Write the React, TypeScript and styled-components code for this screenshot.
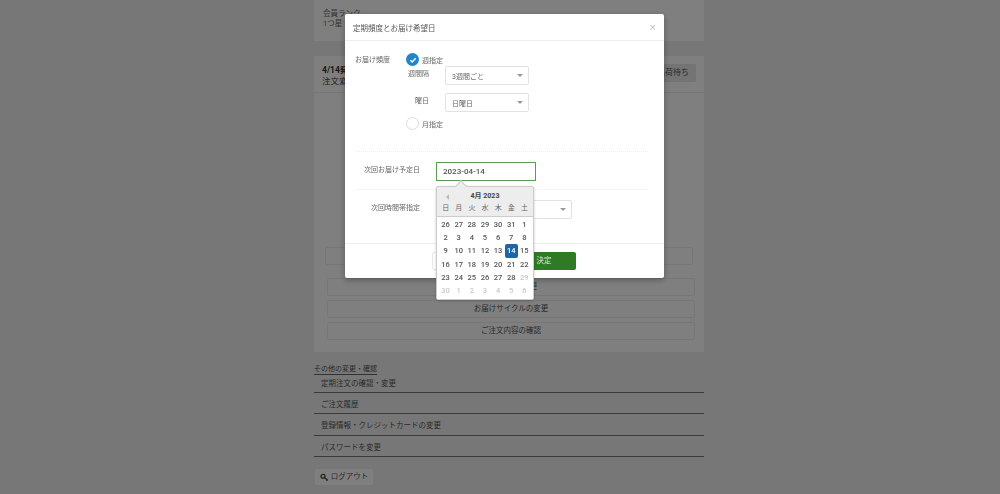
import React from "react";
import styled, { createGlobalStyle } from "styled-components";

const Global = createGlobalStyle`
  html, body { margin: 0; height: 494px; overflow: hidden; background: #eeeeee; }
  body { font-family: Roboto, "Noto Sans CJK JP", sans-serif; color: #333; }
`;
const Page = styled.div`
  width: 390px; margin-left: 314px;
`;
const Card = styled.section`
  background: #fff; padding: 8px 11px; box-sizing: border-box;
`;
const RankCard = styled(Card)`
  height: 41px; margin-bottom: 15px; font-size: 7.5px; line-height: 10px; color: #666; padding: 9px 9px;
`;
const OrderCard = styled(Card)`
  height: 296px; display: flex; flex-direction: column;
`;
const OrderHead = styled.div`
  display: flex; justify-content: space-between; height: 29px; box-sizing: border-box; border-bottom: 1px solid #eee; margin: 0 -11px; padding: 0 8px 0 8px;
  font-size: 8.5px; line-height: 11px; color: #444;
`;
const HeadText = styled.div`padding-top: 1px;`;
const Status = styled.span`
  background: #e8e8e8; height: 18px; line-height: 18px; padding: 0 7px; font-size: 8px; color: #555; border-radius: 2px;
`;
const Bold = styled.b`display: block; font-weight: 700; color: #333;`;
const Actions = styled.div`
  margin-top: auto; display: flex; flex-direction: column; gap: 4px; padding-bottom: 4px;
`;
const LoneAction = styled.div`
  height: 18px; box-sizing: border-box; border: 1px solid #eeeeee; border-radius: 2px; margin-bottom: 9.5px;
`;
const Action = styled.div`
  height: 18px; box-sizing: border-box; border: 1px solid #eeeeee; border-radius: 2px; margin: 0 -2px 0 2px;
  font-size: 7.5px; line-height: 16px; text-align: center; color: #555;
`;
const SectionLink = styled.a`
  display: block; width: fit-content; margin: 13px 0 -3.4px; font-size: 7px; line-height: 9px; color: #555; border-bottom: 1px solid #666;
`;
const LinkRow = styled.div`
  height: 21.4px; box-sizing: border-box; border-bottom: 1px solid #777; padding: 6px 7px 0; font-size: 7.5px; line-height: 12px; color: #555;
`;
const Logout = styled.div`
  margin-top: 12px; margin-left: 1px; width: 58px; height: 16px; background: #fff; border-radius: 2px; font-size: 7.5px; line-height: 16px;
  display: flex; align-items: center; justify-content: center; gap: 2px; color: #555;
`;
const Overlay = styled.div`
  position: fixed; inset: 0; background: rgba(0,0,0,.5);
`;
const Modal = styled.div`
  position: absolute; left: 345px; top: 14px; width: 319px; height: 264px; background: #fff; border-radius: 2px;
  box-shadow: 0 2px 6px rgba(0,0,0,.3); display: flex; flex-direction: column;
`;
const ModalHead = styled.header`
  height: 26px; flex: none; box-sizing: content-box; border-bottom: 1px solid #eee; display: flex; justify-content: space-between; align-items: center;
  padding: 0 8px; font-size: 7.5px; color: #555;
`;
const Close = styled.span`color: #bbb; font-size: 11px; font-family: "Liberation Sans", sans-serif;`;
const ModalBody = styled.div`
  flex: 1; padding: 12px 16px 0 10px; font-size: 7px; color: #666;
`;
const FreqRow = styled.div`display: flex; height: 98px; border-bottom: 1px dotted #eee;`;
const FreqLabel = styled.div`width: 51px; padding-top: 1px;`;
const FreqCol = styled.div`display: flex; flex-direction: column;`;
const RadioRow = styled.div`display: flex; align-items: center; gap: 3px; height: 13px;`;
const Radio = styled.span<{ $on?: boolean }>`
  width: 13px; height: 13px; border-radius: 50%; display: flex; align-items: center; justify-content: center;
  background: ${p => (p.$on ? "#2185c8" : "#fff")}; border: ${p => (p.$on ? "0" : "1px solid #ddd")};
  box-sizing: border-box;
`;
const SelectRow = styled.div<{ $top: number; $bottom?: number }>`
  display: flex; align-items: center; height: 19px; margin-top: ${p => p.$top}px; margin-bottom: ${p => p.$bottom ?? 0}px;
`;
const SelectLabel = styled.div`width: 39px; text-align: right; margin: -5px 16px 0 -16px; flex: none;`;
const Select = styled.div<{ $w: number }>`
  width: ${p => p.$w}px; height: 19px; box-sizing: border-box; border: 1px solid #e2e2e2; border-radius: 2px; display: flex; align-items: center;
  justify-content: space-between; padding: 0 5px 0 6px; font-size: 7px; color: #666; background: #fff;
  &::after { content: ""; border: 3px solid transparent; border-top: 3px solid #999; border-bottom: 0; }
`;
const DateRow = styled.div`display: flex; align-items: center; height: 37px; border-bottom: 1px dotted #eee;`;
const DateLabel = styled.div`width: 65px; margin-right: 16px; text-align: right; flex: none; margin-top: -3px;`;
const DateInput = styled.div`
  width: 100px; height: 19px; box-sizing: border-box; margin-top: 2px; border: 1px solid #5a9a55; padding-left: 6px; line-height: 17px; font-size: 8px; font-weight: 500; color: #555;
`;
const TimeRow = styled.div`display: flex; align-items: center; height: 37px;`;
const TimeSelect = styled(Select)`margin-top: 1px; justify-content: flex-end;`;
const ModalFoot = styled.footer`
  height: 35px; flex: none; border-top: 1px solid #eee; display: flex; gap: 4px; padding: 8px 0 0 87px; box-sizing: border-box;
`;
const Cancel = styled.div`
  width: 76px; height: 18px; box-sizing: border-box; border: 1px solid #e8e8e8; border-radius: 2px;
`;
const Confirm = styled.div`
  width: 64px; height: 18px; line-height: 18px; background: #2f7a24; border-radius: 2px; color: #dfe9d8; font-size: 7.5px; text-align: center;
`;
const Picker = styled.div`
  position: absolute; left: 436px; top: 186px; width: 98px; height: 114px; background: #fff; border: 1px solid #ccc; box-sizing: border-box;
  border-radius: 2px; box-shadow: 0 1px 3px rgba(0,0,0,.2); font-size: 7.5px;
  &::before { content: ""; position: absolute; left: 20px; top: -5px; width: 7px; height: 7px; background: #ededed; border-left: 1px solid #ccc; border-top: 1px solid #ccc; transform: rotate(45deg); }
`;
const PickerHead = styled.div`
  position: relative; height: 29px; background: #ededed; border-bottom: 1px solid #ccc; border-radius: 2px 2px 0 0;
`;
const Title = styled.div`text-align: center; font-weight: 700; font-size: 7px; line-height: 11px; padding-top: 4px; margin-bottom: 1px; color: #444;`;
const Prev = styled.span`position: absolute; left: 9px; top: 7px; border: 3px solid transparent; border-right: 3px solid #bbb; border-left: 0;`;
const Grid = styled.div`
  display: grid; grid-template-columns: repeat(7, 13.14px); padding: 0 2px; justify-content: center;
`;
const Week = styled.span`text-align: center; line-height: 11px; color: #666; font-size: 7px;`;
const Days = styled(Grid)`padding-top: 1px; grid-auto-rows: 13.2px;`;
const Day = styled.span<{ $muted?: boolean; $sel?: boolean }>`
  text-align: center; line-height: 13px; font-weight: 500; border-radius: 2px;
  color: ${p => (p.$sel ? "#fff" : p.$muted ? "#c8c8c8" : "#555")};
  background: ${p => (p.$sel ? "#1d66a6" : "transparent")};
`;

const days = [26,27,28,29,30,31,1,2,3,4,5,6,7,8,9,10,11,12,13,14,15,16,17,18,19,20,21,22,23,24,25,26,27,28,29,30,1,2,3,4,5,6];
const weeks = ["日","月","火","水","木","金","土"];

const KeyIcon = () => (
  <svg width="9" height="9" viewBox="0 0 10 10" fill="none" stroke="#444" strokeWidth="1.4">
    <circle cx="3.4" cy="3.6" r="2.2" /><path d="M5 5.2 8.8 8M7.4 7v1.6" />
  </svg>
);
const Check = () => (
  <svg width="8" height="8" viewBox="0 0 10 10" fill="none" stroke="#fff" strokeWidth="1.8"><path d="M1.8 5.2 4 7.4 8.4 2.8" /></svg>
);

export default function App() {
  return (
    <>
      <Global />
      <Page>
        <RankCard>会員ランク<br />1つ星</RankCard>
        <OrderCard>
          <OrderHead>
            <HeadText><Bold>4/14発送予定</Bold>注文変更</HeadText>
            <Status>出荷待ち</Status>
          </OrderHead>
          <Actions>
            <LoneAction />
            <Action>お届け先の変更</Action>
            <Action>お届けサイクルの変更</Action>
            <Action>ご注文内容の確認</Action>
          </Actions>
        </OrderCard>
        <SectionLink>その他の変更・確認</SectionLink>
        <LinkRow>定期注文の確認・変更</LinkRow>
        <LinkRow>ご注文履歴</LinkRow>
        <LinkRow>登録情報・クレジットカードの変更</LinkRow>
        <LinkRow>パスワードを変更</LinkRow>
        <Logout><KeyIcon />ログアウト</Logout>
      </Page>
      <Overlay>
        <Modal>
          <ModalHead>定期頻度とお届け希望日<Close>×</Close></ModalHead>
          <ModalBody>
            <FreqRow>
              <FreqLabel>お届け頻度</FreqLabel>
              <FreqCol>
                <RadioRow><Radio $on><Check /></Radio>週指定</RadioRow>
                <SelectRow $top={0}><SelectLabel>週間隔</SelectLabel><Select $w={84}>3週間ごと</Select></SelectRow>
                <SelectRow $top={8} $bottom={5}><SelectLabel>曜日</SelectLabel><Select $w={84}>日曜日</Select></SelectRow>
                <RadioRow><Radio />月指定</RadioRow>
              </FreqCol>
            </FreqRow>
            <DateRow><DateLabel>次回お届け予定日</DateLabel><DateInput>2023-04-14</DateInput></DateRow>
            <TimeRow><DateLabel>次回時間帯指定</DateLabel><TimeSelect $w={136} /></TimeRow>
          </ModalBody>
          <ModalFoot><Cancel /><Confirm>決定</Confirm></ModalFoot>
        </Modal>
        <Picker>
          <PickerHead>
            <Prev />
            <Title>4月 2023</Title>
            <Grid>{weeks.map(w => <Week key={w}>{w}</Week>)}</Grid>
          </PickerHead>
          <Days>
            {days.map((d, i) => <Day key={i} $sel={i === 19} $muted={i >= 34}>{d}</Day>)}
          </Days>
        </Picker>
      </Overlay>
    </>
  );
}
